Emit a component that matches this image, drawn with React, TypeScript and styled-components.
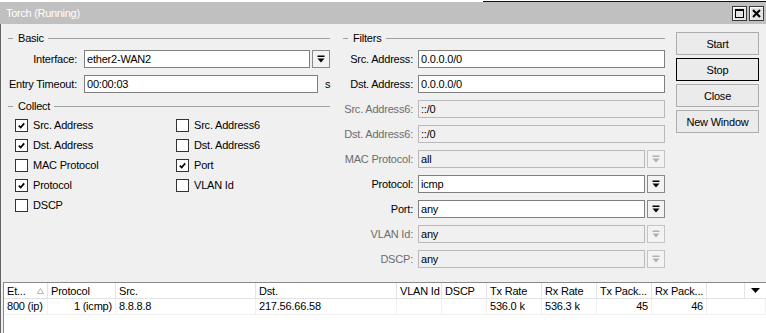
import React from 'react';
import styled, { createGlobalStyle } from 'styled-components';

const GlobalStyle = createGlobalStyle`
  html, body { margin: 0; padding: 0; background: #fff; }
  body {
    font-family: "Liberation Sans", Arial, sans-serif;
    font-size: 11px;
    letter-spacing: -0.2px;
    color: #000;
  }
  #root { width: 766px; height: 333px; overflow: hidden; }
`;

const TopStrip = styled.div`
  height: 2px;
  background: #fff;
  display: flex;
  align-items: flex-end;
`;

const StripLine = styled.div`
  margin-left: 483px;
  flex: 1;
  height: 1px;
  background: #111;
`;

const Window = styled.div`
  display: flex;
  flex-direction: column;
  height: 331px;
`;

const TitleBar = styled.div`
  height: 22px;
  flex: none;
  background: #c0c0c0;
  display: flex;
  align-items: flex-start;
  justify-content: space-between;
`;

const Title = styled.div`
  color: #fff;
  letter-spacing: -0.3px;
  line-height: 22px;
  padding-left: 6px;
`;

const TitleButtons = styled.div`
  display: flex;
  gap: 2px;
  margin-top: 4px;
  margin-right: 2px;
`;

const TitleButton = styled.div`
  width: 15px;
  height: 15px;
  box-sizing: border-box;
  border: 1px solid #3a3a3a;
  background: #e4e4e4;
  box-shadow: inset 1px 1px 0 #fff;
  display: flex;
  align-items: center;
  justify-content: center;
`;

const Body = styled.div`
  flex: 1;
  min-height: 0;
  background: #f0f0f0;
  border-left: 1px solid #646464;
  padding-left: 3px;
  display: flex;
  flex-direction: column;
`;

const Main = styled.div`
  display: flex;
  align-items: flex-start;
  gap: 9px;
`;

const Panel = styled.div`
  width: 326px;
  padding-top: 7px;
  display: flex;
  flex-direction: column;
`;

const Legend = styled.div<{ $mt?: number }>`
  display: flex;
  align-items: center;
  height: 14px;
  margin-top: ${p => p.$mt ?? 0}px;
  &::before {
    content: '';
    width: 5px;
    height: 1px;
    background: #a0a0a0;
    margin-left: 4px;
    margin-right: 5px;
  }
  &::after {
    content: '';
    flex: 1;
    height: 1px;
    background: #a0a0a0;
    margin-left: 4px;
  }
`;

const FieldStack = styled.div`
  display: flex;
  flex-direction: column;
  gap: 7px;
  margin-top: 5px;
`;

const FieldRow = styled.div<{ $labelWidth: number; $gap: number }>`
  display: grid;
  grid-template-columns: ${p => p.$labelWidth}px 1fr;
  column-gap: ${p => p.$gap}px;
  height: 18px;
  align-items: center;
`;

const Label = styled.div<{ $disabled?: boolean }>`
  text-align: right;
  white-space: nowrap;
  color: ${p => (p.$disabled ? '#6d6d6d' : '#000')};
`;

const Control = styled.div`
  display: flex;
  align-items: center;
  gap: 2px;
  height: 18px;
`;

const TextBox = styled.div<{ $disabled?: boolean }>`
  flex: 1;
  height: 18px;
  box-sizing: border-box;
  border: 1px solid ${p => (p.$disabled ? '#b9b9b9' : '#7f7f7f')};
  background: ${p => (p.$disabled ? '#f0f0f0' : '#fff')};
  padding-left: 2px;
  line-height: 16px;
  white-space: nowrap;
  overflow: hidden;
`;

const DropButton = styled.div<{ $disabled?: boolean }>`
  width: 18px;
  height: 18px;
  box-sizing: border-box;
  border: 1px solid ${p => (p.$disabled ? '#c4c4c4' : '#8a8a8a')};
  background: #f3f3f3;
  display: flex;
  align-items: center;
  justify-content: center;
`;

const Unit = styled.span`
  width: 5px;
  margin-left: 5px;
`;

const CheckGrid = styled.div`
  display: grid;
  grid-template-columns: 161px 1fr;
  grid-auto-rows: 20px;
  padding-left: 11px;
  margin-top: 2px;
`;

const CheckItem = styled.label`
  display: flex;
  align-items: center;
  gap: 5px;
`;

const Box = styled.span`
  width: 13px;
  height: 13px;
  box-sizing: border-box;
  border: 1px solid #333;
  background: #fff;
  display: flex;
  align-items: center;
  justify-content: center;
`;

const ButtonCol = styled.div`
  margin-left: 2px;
  margin-top: 8px;
  width: 83px;
  display: flex;
  flex-direction: column;
  gap: 3px;
`;

const Button = styled.div<{ $focused?: boolean }>`
  height: 23px;
  box-sizing: border-box;
  border: 1px solid ${p => (p.$focused ? '#000' : '#adadad')};
  background: #ebebeb;
  display: flex;
  align-items: center;
  justify-content: center;
`;

const Table = styled.div`
  flex: 1;
  margin-top: 14px;
  margin-left: -1px;
  background: #fff;
  border-top: 1px solid #8a8a8a;
  border-left: 1px solid #8a8a8a;
`;

const COLS = '44px 68px 140px 141px 45px 45px 55px 55px 55px 55px 1fr';

const HeadRow = styled.div`
  display: grid;
  grid-template-columns: ${COLS} 21px;
  height: 15px;
  border-bottom: 1px solid #e3e3e3;
`;

const HeadCell = styled.div<{ $last?: boolean }>`
  display: flex;
  align-items: center;
  justify-content: ${p => (p.$last ? 'center' : 'space-between')};
  padding: 0 3px;
  border-right: ${p => (p.$last ? 'none' : '1px solid #e3e3e3')};
  white-space: nowrap;
  overflow: hidden;
`;

const DataRow = styled.div`
  display: grid;
  grid-template-columns: ${COLS};
  height: 15px;
  border-bottom: 1px solid #f0f0f0;
`;

const Cell = styled.div<{ $right?: boolean }>`
  padding: 0 3px;
  line-height: 15px;
  text-align: ${p => (p.$right ? 'right' : 'left')};
  border-right: 1px solid #f0f0f0;
  white-space: nowrap;
  overflow: hidden;
`;

const DropIcon = ({ disabled }: { disabled?: boolean }) => {
  const c = disabled ? '#b0b0b0' : '#000';
  return (
    <svg width="8" height="8" viewBox="0 0 8 8">
      <rect x="0.5" y="0.5" width="7" height="1.5" fill={c} />
      <polygon points="0.5,3.5 7.5,3.5 4,7.5" fill={c} />
    </svg>
  );
};

const Check = ({ on }: { on?: boolean }) => (
  <Box>
    {on && (
      <svg width="9" height="9" viewBox="0 0 9 9">
        <path d="M1.8 4.6 L3.7 6.5 L7.2 2.4" stroke="#000" strokeWidth="1.7" fill="none" />
      </svg>
    )}
  </Box>
);

type Field = { label: string; value: string; disabled?: boolean; drop?: boolean };

const filters: Field[] = [
  { label: 'Src. Address:', value: '0.0.0.0/0' },
  { label: 'Dst. Address:', value: '0.0.0.0/0' },
  { label: 'Src. Address6:', value: '::/0', disabled: true },
  { label: 'Dst. Address6:', value: '::/0', disabled: true },
  { label: 'MAC Protocol:', value: 'all', disabled: true, drop: true },
  { label: 'Protocol:', value: 'icmp', drop: true },
  { label: 'Port:', value: 'any', drop: true },
  { label: 'VLAN Id:', value: 'any', disabled: true, drop: true },
  { label: 'DSCP:', value: 'any', disabled: true, drop: true },
];

const collect: [string, boolean][] = [
  ['Src. Address', true],
  ['Src. Address6', false],
  ['Dst. Address', true],
  ['Dst. Address6', false],
  ['MAC Protocol', false],
  ['Port', true],
  ['Protocol', true],
  ['VLAN Id', false],
  ['DSCP', false],
];

const headers = ['Et...', 'Protocol', 'Src.', 'Dst.', 'VLAN Id', 'DSCP', 'Tx Rate', 'Rx Rate', 'Tx Pack...', 'Rx Pack...', ''];

const row: [string, boolean][] = [
  ['800 (ip)', false],
  ['1 (icmp)', true],
  ['8.8.8.8', false],
  ['217.56.66.58', false],
  ['', false],
  ['', false],
  ['536.0 k', false],
  ['536.3 k', false],
  ['45', true],
  ['46', true],
  ['', false],
];

export default function App() {
  return (
    <>
      <GlobalStyle />
      <TopStrip>
        <StripLine />
      </TopStrip>
      <Window>
        <TitleBar>
          <Title>Torch (Running)</Title>
          <TitleButtons>
            <TitleButton>
              <svg width="9" height="9" viewBox="0 0 9 9">
                <rect x="0.5" y="0.5" width="8" height="8" fill="none" stroke="#000" />
                <rect x="0" y="0" width="9" height="2" fill="#000" />
              </svg>
            </TitleButton>
            <TitleButton>
              <svg width="9" height="9" viewBox="0 0 9 9">
                <path d="M1 1 L8 8 M8 1 L1 8" stroke="#000" strokeWidth="2" />
              </svg>
            </TitleButton>
          </TitleButtons>
        </TitleBar>
        <Body>
          <Main>
            <Panel>
              <Legend>Basic</Legend>
              <FieldStack>
                <FieldRow $labelWidth={73} $gap={7}>
                  <Label>Interface:</Label>
                  <Control>
                    <TextBox>ether2-WAN2</TextBox>
                    <DropButton>
                      <DropIcon />
                    </DropButton>
                  </Control>
                </FieldRow>
                <FieldRow $labelWidth={73} $gap={7}>
                  <Label>Entry Timeout:</Label>
                  <Control>
                    <TextBox>00:00:03</TextBox>
                    <Unit>s</Unit>
                  </Control>
                </FieldRow>
              </FieldStack>
              <Legend $mt={6}>Collect</Legend>
              <CheckGrid>
                {collect.map(([name, on]) => (
                  <CheckItem key={name}>
                    <Check on={on} />
                    {name}
                  </CheckItem>
                ))}
              </CheckGrid>
            </Panel>
            <Panel>
              <Legend>Filters</Legend>
              <FieldStack>
                {filters.map(f => (
                  <FieldRow key={f.label} $labelWidth={74} $gap={5}>
                    <Label $disabled={f.disabled}>{f.label}</Label>
                    <Control>
                      <TextBox $disabled={f.disabled}>{f.value}</TextBox>
                      {f.drop && (
                        <DropButton $disabled={f.disabled}>
                          <DropIcon disabled={f.disabled} />
                        </DropButton>
                      )}
                    </Control>
                  </FieldRow>
                ))}
              </FieldStack>
            </Panel>
            <ButtonCol>
              <Button>Start</Button>
              <Button $focused>Stop</Button>
              <Button>Close</Button>
              <Button>New Window</Button>
            </ButtonCol>
          </Main>
          <Table>
            <HeadRow>
              {headers.map((h, i) => (
                <HeadCell key={i}>
                  {h}
                  {i === 0 && (
                    <svg width="7" height="6" viewBox="0 0 7 6">
                      <polygon points="3.5,0.5 6.5,5.5 0.5,5.5" fill="none" stroke="#b5b5b5" />
                    </svg>
                  )}
                </HeadCell>
              ))}
              <HeadCell $last>
                <svg width="9" height="5" viewBox="0 0 9 5">
                  <polygon points="0,0 9,0 4.5,5" fill="#000" />
                </svg>
              </HeadCell>
            </HeadRow>
            <DataRow>
              {row.map(([v, right], i) => (
                <Cell key={i} $right={right}>
                  {v}
                </Cell>
              ))}
            </DataRow>
          </Table>
        </Body>
      </Window>
    </>
  );
}
